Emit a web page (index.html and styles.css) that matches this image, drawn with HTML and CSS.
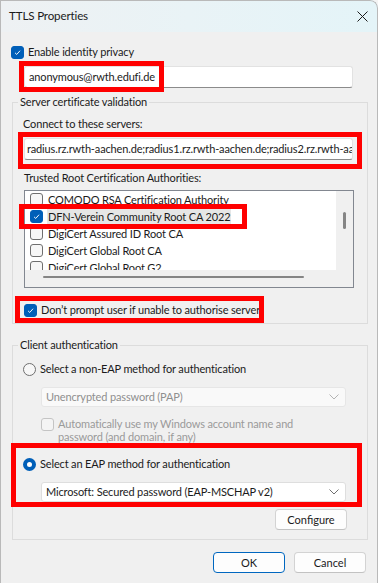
FILE: index.html
```html
<!DOCTYPE html>
<html lang="en">
<head>
   <meta charset="UTF-8">
   <meta name="viewport" content="width=device-width, initial-scale=1.0">
   <title>TTLS Properties</title>
   <link rel="stylesheet" href="styles.css">
</head>
<body>
   <div class="window">
       <div class="titlebar">
           <span class="title">TTLS Properties</span>
           <svg class="close" width="11" height="11" viewBox="0 0 11 11"><path d="M0.5 0.5L10.5 10.5M10.5 0.5L0.5 10.5"/></svg>
       </div>

       <div class="content">
           <div class="check-row privacy-row">
               <span class="box checked"><svg viewBox="0 0 13 13"><path d="M3.6 6.9L5.6 8.8L9.5 4.4"/></svg></span>
               <span>Enable identity privacy</span>
           </div>
           <div class="textbox identity">anonymous@rwth.edufi.de</div>

           <fieldset class="group">
               <legend>Server certificate validation</legend>
               <div class="group-body server-body">
                   <div class="label">Connect to these servers:</div>
                   <div class="textbox servers">radius.rz.rwth-aachen.de;radius1.rz.rwth-aachen.de;radius2.rz.rwth-aachen.de</div>
                   <div class="label trusted">Trusted Root Certification Authorities:</div>

                   <div class="listbox">
                       <ul class="list">
                           <li><span class="box"></span><span class="item-text">COMODO RSA Certification Authority</span></li>
                           <li><span class="box checked"><svg viewBox="0 0 13 13"><path d="M3.6 6.9L5.6 8.8L9.5 4.4"/></svg></span><span class="item-text selected">DFN-Verein Community Root CA 2022</span></li>
                           <li><span class="box"></span><span class="item-text">DigiCert Assured ID Root CA</span></li>
                           <li><span class="box"></span><span class="item-text">DigiCert Global Root CA</span></li>
                           <li><span class="box"></span><span class="item-text">DigiCert Global Root G2</span></li>
                       </ul>
                       <div class="vscroll"><span class="vthumb"></span></div>
                       <div class="hscroll"><span class="hthumb"></span></div>
                       <div class="corner"></div>
                   </div>

                   <div class="check-row prompt-row">
                       <span class="box checked"><svg viewBox="0 0 13 13"><path d="M3.6 6.9L5.6 8.8L9.5 4.4"/></svg></span>
                       <span>Don’t prompt user if unable to authorise server</span>
                   </div>
               </div>
           </fieldset>

           <fieldset class="group client-group">
               <legend>Client authentication</legend>
               <div class="group-body client-body">
                   <div class="check-row radio-row">
                       <span class="radio"></span>
                       <span>Select a non-EAP method for authentication</span>
                   </div>
                   <div class="combo disabled">
                       <span>Unencrypted password (PAP)</span>
                       <svg class="chevron" width="10" height="6" viewBox="0 0 10 6"><path d="M0.5 0.5L5 5L9.5 0.5"/></svg>
                   </div>
                   <div class="check-row auto-row disabled">
                       <span class="box"></span>
                       <span>Automatically use my Windows account name and<br>password (and domain, if any)</span>
                   </div>
                   <div class="check-row radio-row eap-row">
                       <span class="radio on"></span>
                       <span>Select an EAP method for authentication</span>
                   </div>
                   <div class="combo">
                       <span>Microsoft: Secured password (EAP-MSCHAP v2)</span>
                       <svg class="chevron" width="10" height="6" viewBox="0 0 10 6"><path d="M0.5 0.5L5 5L9.5 0.5"/></svg>
                   </div>
                   <button class="btn configure">Configure</button>
               </div>
           </fieldset>

           <div class="actions">
               <button class="btn primary">OK</button>
               <button class="btn">Cancel</button>
           </div>
       </div>

       <!-- red highlight annotations -->
       <div class="mark mark-identity"></div>
       <div class="mark mark-servers"></div>
       <div class="mark mark-dfn"></div>
       <div class="mark mark-prompt"></div>
       <div class="mark mark-eap"></div>
   </div>
</body>
</html>
```

FILE: styles.css
```css
* {
    box-sizing: border-box;
}

html {
    background-color: #f4f4f4;
}

body {
    margin: 0;
    font-family: Lato, 'Liberation Sans', sans-serif;
    font-size: 11px;
    line-height: 16px;
    letter-spacing: -0.15px;
    color: #1b1b1b;
}

.window {
    position: relative;
    width: 378px;
    height: 583px;
    background-color: #f0f0f0;
    border-top-right-radius: 8px;
    overflow: hidden;
}

.window::after {
    content: '';
    position: absolute;
    inset: 0;
    border: 1px solid #b9b9b9;
    border-bottom: 0;
    border-top-right-radius: 8px;
    pointer-events: none;
}

.titlebar {
    height: 32px;
    display: flex;
    align-items: center;
    justify-content: space-between;
    padding: 0 10px 0 9px;
    background: linear-gradient(90deg, #eef1f3 0%, #e9f3f6 50%, #e4f4f8 100%);
}

.title {
    font-size: 11.6px;
}

.close path {
    stroke: #1b1b1b;
    stroke-width: 1;
    fill: none;
}

.content {
    display: flex;
    flex-direction: column;
    padding: 0 11px;
}

/* checkboxes and radios */
.check-row {
    display: flex;
    align-items: center;
    gap: 4px;
}

.box {
    flex: none;
    width: 13px;
    height: 13px;
    border: 1px solid #6f6f6f;
    border-radius: 3px;
    background-color: #f7f7f7;
}

.box.checked {
    border-color: #005fb8;
    background-color: #005fb8;
}

.box svg {
    display: block;
    width: 11px;
    height: 11px;
    margin: 0;
}

.box svg path {
    fill: none;
    stroke: #ffffff;
    stroke-width: 1.1;
}

.radio {
    flex: none;
    width: 13px;
    height: 13px;
    border: 1px solid #6f6f6f;
    border-radius: 50%;
    background-color: #f7f7f7;
}

.radio.on {
    border: 4px solid #005fb8;
    background-color: #ffffff;
}

.privacy-row {
    margin-top: 12px;
}

.textbox {
    height: 22px;
    padding: 0 4px;
    background-color: #ffffff;
    border: 1px solid #e2e2e2;
    border-bottom-color: #8b8b8b;
    border-radius: 3px;
    line-height: 20px;
    white-space: nowrap;
    overflow: hidden;
}

.identity {
    width: 329px;
    margin: 6px 0 0 13px;
}

/* group boxes */
.group {
    width: 356px;
    margin: 6px 0 0 1px;
    padding: 0;
    border: 1px solid #dcdcdc;
    min-inline-size: 0;
}

.group legend {
    margin-left: 5px;
    padding: 0 2px;
    line-height: 16px;
}

.group-body {
    display: flex;
    flex-direction: column;
    align-items: flex-start;
}

.server-body {
    padding: 6px 0 5px 10px;
}

.servers {
    width: 329px;
    margin: 6px 0 0 1px;
    padding-left: 2px;
}

.trusted {
    margin: 10px 0 0 1px;
}

/* certificate list */
.listbox {
    width: 330px;
    height: 98px;
    margin: 4px 0 0 1px;
    border: 1px solid #828790;
    display: grid;
    grid-template-columns: 311px 17px;
    grid-template-rows: 79px 17px;
}

.list {
    margin: 0;
    padding: 0;
    list-style: none;
    background-color: #ffffff;
    overflow: hidden;
}

.list li {
    height: 17px;
    display: flex;
    align-items: center;
    gap: 4px;
    padding-left: 5px;
    white-space: nowrap;
}

.item-text {
    padding: 0 1px;
    line-height: 17px;
}

.item-text.selected {
    background-color: #e6e6e6;
}

.vscroll,
.hscroll,
.corner {
    background-color: #f0f0f0;
}

.vthumb {
    display: block;
    width: 3px;
    height: 17px;
    margin: 21px 0 0 7px;
    border-radius: 2px;
    background-color: #858585;
}

.hthumb {
    display: block;
    width: 261px;
    height: 2px;
    margin: 6px 0 0 18px;
    border-radius: 1px;
    background-color: #858585;
}

.prompt-row {
    margin: 14px 0 0 1px;
}

/* client authentication */
.client-group {
    margin-top: 13px;
}

.client-body {
    padding: 8px 0 9px 10px;
}

.combo {
    width: 305px;
    height: 20px;
    margin: 10px 0 0 18px;
    padding: 0 6px 0 4px;
    display: flex;
    align-items: center;
    justify-content: space-between;
    background-color: #ffffff;
    border: 1px solid #dedede;
    border-radius: 3px;
}

.combo.disabled {
    background-color: #f9f9f9;
    color: #8f8f8f;
    border-color: #e6e6e6;
}

.chevron path {
    fill: none;
    stroke: #6f6f6f;
    stroke-width: 1;
}

.combo.disabled .chevron path {
    stroke: #b3b3b3;
}

.auto-row {
    margin: 10px 0 0 18px;
    align-items: flex-start;
    line-height: 13px;
}

.auto-row .box {
    margin-top: 1px;
}

.check-row.disabled {
    color: #9a9a9a;
}

.check-row.disabled .box {
    border-color: #c4c4c4;
    background-color: #f4f4f4;
}

.eap-row {
    margin-top: 13px;
}

/* buttons */
.btn {
    width: 72px;
    height: 21px;
    padding: 0;
    font-family: inherit;
    font-size: 11px;
    color: #1b1b1b;
    background-color: #fdfdfd;
    border: 1px solid #d3d3d3;
    border-bottom-color: #c2c2c2;
    border-radius: 4px;
}

.btn.primary {
    border: 1px solid #0067c0;
}

.configure {
    margin-top: 7px;
    margin-left: 252px;
}

.actions {
    display: flex;
    justify-content: flex-end;
    gap: 9px;
    margin: 12px 1px 0 0;
}

/* red annotation boxes */
.mark {
    position: absolute;
    border: 5px solid #ff0000;
    pointer-events: none;
}

.mark-identity { left: 19px; top: 61px; width: 145px; height: 31px; }
.mark-servers { left: 18px; top: 132px; width: 344px; height: 37px; }
.mark-dfn { left: 19px; top: 204px; width: 228px; height: 25px; }
.mark-prompt { left: 15px; top: 296px; width: 249px; height: 27px; }
.mark-eap { left: 11px; top: 443px; width: 351px; height: 64px; }
```
